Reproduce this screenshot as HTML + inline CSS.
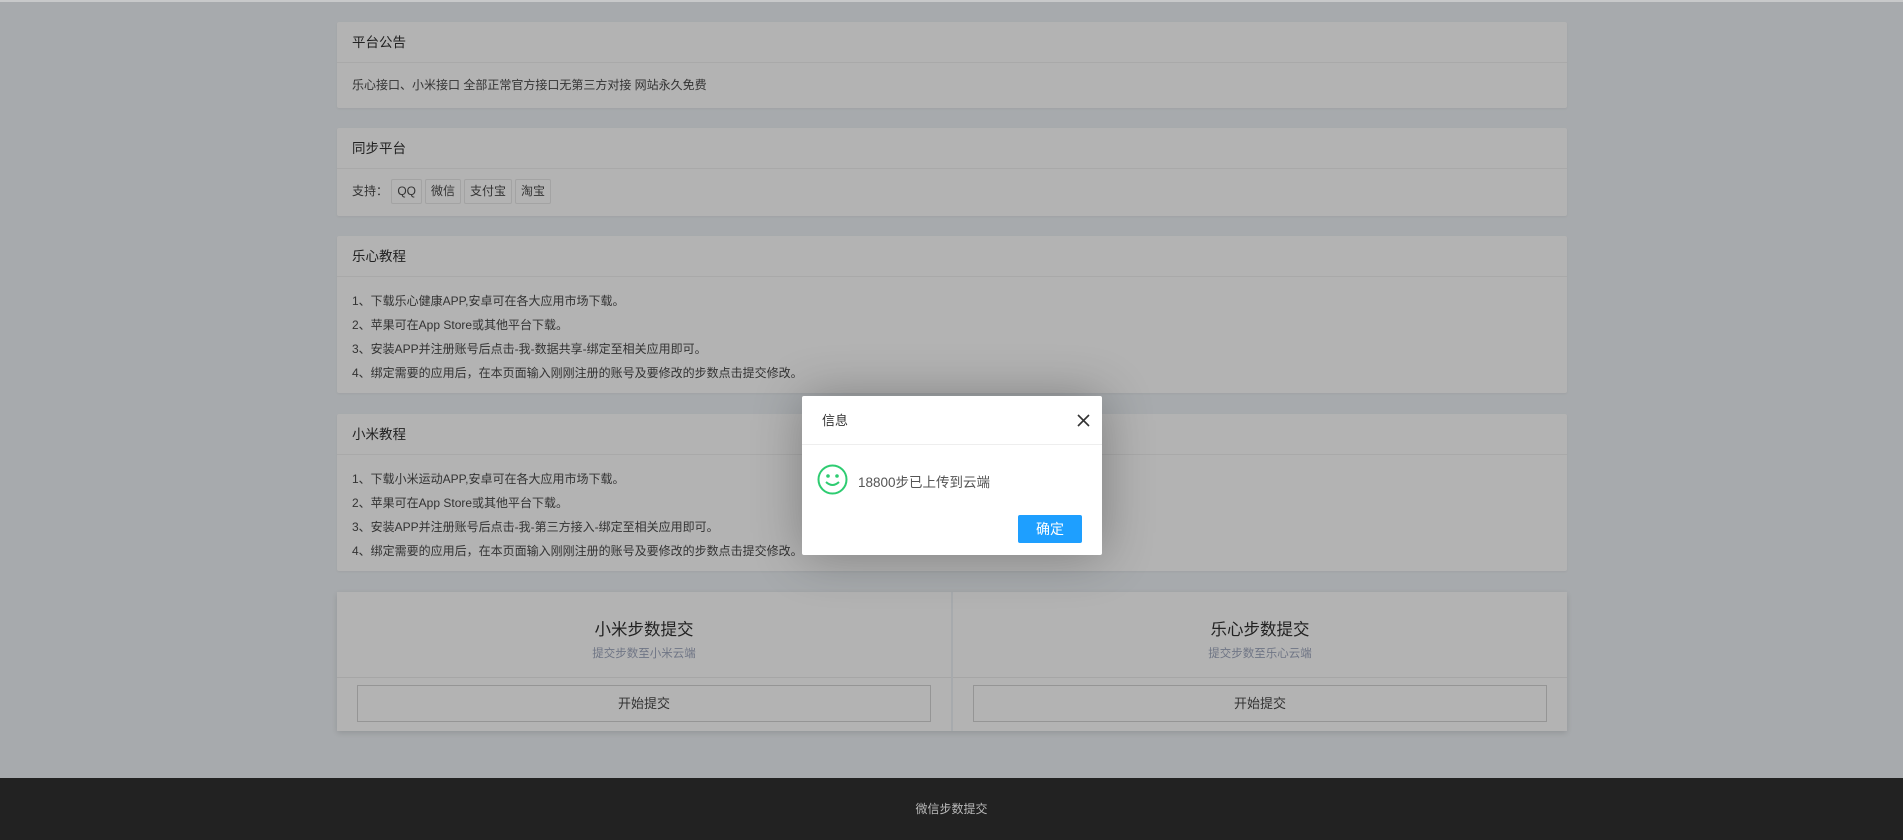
<!DOCTYPE html>
<html><head><meta charset="utf-8"><style>
*{margin:0;padding:0;box-sizing:border-box}
body{width:1903px;height:840px;background:#a7aaad;font-family:"Liberation Sans","Noto Sans CJK SC",sans-serif;color:#333;position:relative;overflow:hidden}
.top{position:absolute;left:0;top:0;width:1903px;height:2px;background:#c8c9ca}
.card{position:absolute;left:337px;width:1230px;background:#b3b3b3;border-radius:2px;box-shadow:0 1px 2px rgba(0,0,0,.05)}
.hd{height:41px;line-height:41px;padding-left:15px;font-size:13.5px;color:#222;border-bottom:1px solid #a9a9a9}
.bd{padding:0 15px;font-size:12px;color:#333}
.tag{display:inline-block;border:1px solid #a3a3a3;height:25px;line-height:23px;padding:0 5px;margin-right:3px;font-size:12px;color:#333;border-radius:2px}
.half{position:absolute;top:0;width:614px;height:139px;background:#b3b3b3}
.half .t{position:absolute;top:24px;width:100%;text-align:center;font-size:16.5px;color:#222}
.half .s{position:absolute;top:53px;width:100%;text-align:center;font-size:11.5px;color:#6f7585}
.half .ln{position:absolute;top:85px;left:0;right:0;border-top:1px solid #a6a6a6}
.half .b{position:absolute;top:93px;left:20px;right:20px;height:37px;border:1px solid #959595;text-align:center;line-height:35px;font-size:13px;color:#333}
.foot{position:absolute;left:0;top:778px;width:1903px;height:62px;background:#222;color:#b9b9b9;text-align:center;line-height:62px;font-size:12px}
.dlg{position:absolute;left:802px;top:396px;width:300px;height:159px;background:#fff;border-radius:2px;box-shadow:1px 1px 50px rgba(0,0,0,.3)}
</style></head><body>
<div class="top"></div>
<div class="card" style="top:22px;height:86px"><div class="hd">平台公告</div><div class="bd" style="line-height:44px">乐心接口、小米接口 全部正常官方接口无第三方对接 网站永久免费</div></div>
<div class="card" style="top:128px;height:88px"><div class="hd">同步平台</div><div class="bd" style="padding-top:10px">支持： <span class="tag">QQ</span><span class="tag">微信</span><span class="tag">支付宝</span><span class="tag">淘宝</span></div></div>
<div class="card" style="top:236px;height:157px"><div class="hd">乐心教程</div><div class="bd" style="padding-top:12px;line-height:24px">1、下载乐心健康APP,安卓可在各大应用市场下载。<br>2、苹果可在App Store或其他平台下载。<br>3、安装APP并注册账号后点击-我-数据共享-绑定至相关应用即可。<br>4、绑定需要的应用后，在本页面输入刚刚注册的账号及要修改的步数点击提交修改。</div></div>
<div class="card" style="top:414px;height:157px"><div class="hd">小米教程</div><div class="bd" style="padding-top:12px;line-height:24px">1、下载小米运动APP,安卓可在各大应用市场下载。<br>2、苹果可在App Store或其他平台下载。<br>3、安装APP并注册账号后点击-我-第三方接入-绑定至相关应用即可。<br>4、绑定需要的应用后，在本页面输入刚刚注册的账号及要修改的步数点击提交修改。</div></div>
<div class="card" style="top:592px;height:139px;background:transparent;box-shadow:0 2px 6px rgba(0,0,0,.12)">
<div class="half" style="left:0"><div class="t">小米步数提交</div><div class="s">提交步数至小米云端</div><div class="ln"></div><div class="b">开始提交</div></div>
<div class="half" style="left:616px"><div class="t">乐心步数提交</div><div class="s">提交步数至乐心云端</div><div class="ln"></div><div class="b">开始提交</div></div>
</div>
<div class="foot">微信步数提交</div>
<div class="dlg">
<div style="height:49px;line-height:49px;padding-left:20px;font-size:13px;color:#333;border-bottom:1px solid #eee">信息</div>
<svg style="position:absolute;left:275px;top:18px" width="13" height="13" viewBox="0 0 13 13"><path d="M1 1L12 12M12 1L1 12" stroke="#333" stroke-width="1.6"/></svg>
<svg style="position:absolute;left:15px;top:68px" width="31" height="31" viewBox="0 0 31 31"><circle cx="15.5" cy="15.5" r="14" fill="none" stroke="#2ecc71" stroke-width="2"/><circle cx="11" cy="12" r="1.8" fill="#2ecc71"/><circle cx="20" cy="12" r="1.8" fill="#2ecc71"/><path d="M9 18Q15.5 24 22 18" fill="none" stroke="#2ecc71" stroke-width="2"/></svg>
<div style="position:absolute;left:56px;top:75px;font-size:13.5px;color:#555">18800步已上传到云端</div>
<div style="position:absolute;left:216px;top:119px;width:64px;height:28px;background:#1e9fff;color:#fff;text-align:center;line-height:28px;font-size:14px;border-radius:2px">确定</div>
</div>
</body></html>
